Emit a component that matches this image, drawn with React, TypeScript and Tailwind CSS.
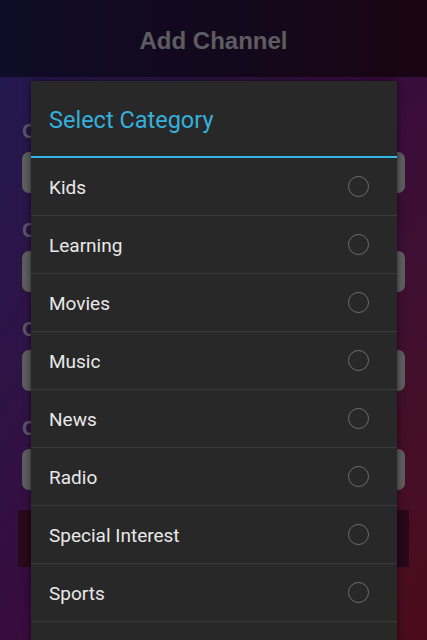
import React from 'react';

const categories = ['Kids', 'Learning', 'Movies', 'Music', 'News', 'Radio', 'Special Interest', 'Sports', 'Technology'];
const fields = ['Channel Name', 'Channel URL', 'Category', 'Country'];

const App: React.FC = () => {
    return (
        <div className="relative w-[427px] h-[640px] overflow-hidden bg-gradient-to-br from-[#4436b4] via-[#7a1a8a] to-[#a81838]">
            {/* page behind the dialog */}
            <div className="h-[77px] flex items-center justify-center pt-[4px] bg-gradient-to-r from-[#221c58] via-[#2a1440] to-[#3a0c2c]">
                <h1 className="text-[24px] font-bold text-[#d0cad8] font-['Liberation_Sans',sans-serif]">Add Channel</h1>
            </div>
            <div className="px-[22px] pt-[43px] flex flex-col gap-[26px] font-['Liberation_Sans',sans-serif]">
                {fields.map((f) => (
                    <div key={f} className="flex flex-col gap-[10px]">
                        <span className="text-[20px] font-bold leading-[22px] text-[#c8bce0]">{f}</span>
                        <div className="h-[41px] rounded-[7px] bg-[#cfcfcf]"></div>
                    </div>
                ))}
                <div className="-mx-[4px] -mt-[6px] h-[57px] bg-[#5a1238]"></div>
            </div>

            {/* dim layer */}
            <div className="absolute inset-0 bg-black/55"></div>

            {/* dialog */}
            <div className="absolute left-[31px] top-[81px] w-[366px] bg-[#282828] shadow-[0_0_6px_rgba(0,0,0,0.6)] font-['Roboto',sans-serif]">
                <div className="h-[75px] flex items-center px-[18px] pt-[5px]">
                    <span className="text-[23.5px] text-[#35b0dc]">Select Category</span>
                </div>
                <div className="h-[2px] bg-[#33b5e5]"></div>
                {categories.map((c) => (
                    <div key={c} className="h-[58px] flex items-center justify-between pl-[18px] pr-[28px] border-b border-[#3a3a3a]">
                        <span className="text-[19px] text-[#e8e8e8] pt-[3px]">{c}</span>
                        <span className="w-[21px] h-[21px] rounded-full border-[1.5px] border-[#6e6e6e]"></span>
                    </div>
                ))}
            </div>
        </div>
    );
};

export default App;
